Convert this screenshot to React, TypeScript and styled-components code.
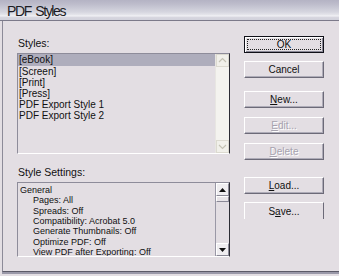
import React from "react";
import styled, { createGlobalStyle, css } from "styled-components";

const Global = createGlobalStyle`
  html, body { margin: 0; padding: 0; background: #e3dee3; }
  body { font-family: "Liberation Sans", Arial, sans-serif; }
`;

const Window = styled.div`
  width: 339px;
  height: 276px;
  background: #e3dee3;
  display: flex;
  flex-direction: column;
  overflow: hidden;
`;

const TitleBar = styled.div`
  height: 21px;
  border-bottom: 1px solid #7c7a8a;
  background: linear-gradient(
    to bottom,
    #b4b3c4 0px,
    #bdbccb 4px,
    #c9c9d5 8px,
    #d6d6df 12px,
    #e6e6ec 15px,
    #f4f4f7 16px,
    #d8d7e0 17px,
    #cfcfd9 21px
  );
  display: flex;
  align-items: center;
  padding-left: 7px;
  padding-top: 2px;
  box-sizing: border-box;
`;

const Title = styled.span`
  font-size: 14px;
  letter-spacing: -1.4px;
  color: #1c1c24;
  word-spacing: 2px;
`;

const Body = styled.div`
  margin-left: 2px;
  height: 250px;
  border-left: 1px solid #8c8a98;
  border-bottom: 1px solid #5c5a68;
  box-shadow: 0 2px 0 #9a98a8;
  display: flex;
  box-sizing: content-box;
`;

const LeftCol = styled.div`
  margin-left: 14px;
  width: 213px;
  padding-top: 16px;
  display: flex;
  flex-direction: column;
`;

const Label = styled.div<{ $top?: number }>`
  font-size: 10.5px;
  line-height: 12px;
  height: 12px;
  margin-top: ${(p) => p.$top ?? 0}px;
  margin-bottom: 4px;
  color: #101010;
  padding-left: 1px;
`;

const ListBox = styled.div<{ $h: number }>`
  height: ${(p) => p.$h}px;
  box-sizing: border-box;
  border-top: 1px solid #8e8c9a;
  border-left: 1px solid #8e8c9a;
  border-bottom: 1px solid #ffffff;
  border-right: 1px solid #2c2c34;
  display: flex;
`;

const ListItems = styled.div`
  flex: 1;
  overflow: hidden;
`;

const Row = styled.div<{ $sel?: boolean }>`
  font-size: 10px;
  line-height: 11px;
  height: 11px;
  padding-left: 1px;
  color: #101010;
  white-space: nowrap;
  ${(p) =>
    p.$sel &&
    css`
      background: #aeadbc;
      height: 12px;
    `}
`;

const ScrollBar = styled.div<{ $light?: boolean }>`
  width: 13px;
  background: ${(p) => (p.$light ? "#f4f3ef" : "#e3dee3")};
  border-left: 1px solid ${(p) => (p.$light ? "#e8e6e2" : "#9a98a6")};
  display: flex;
  flex-direction: column;
  justify-content: space-between;
`;

const ArrowBtn = styled.div<{ $disabled?: boolean }>`
  height: 13px;
  box-sizing: border-box;
  display: flex;
  align-items: center;
  justify-content: center;
  ${(p) =>
    p.$disabled
      ? css`
          border: 1px solid #dcdad0;
          background: #f1f0ea;
        `
      : css`
          border-top: 1px solid #ffffff;
          border-left: 1px solid #ffffff;
          border-bottom: 1px solid #8a8896;
          border-right: 1px solid #8a8896;
          background: #efedf0;
        `}
`;

const Thumb = styled.div`
  height: 6px;
  box-sizing: border-box;
  border-top: 1px solid #ffffff;
  border-left: 1px solid #ffffff;
  border-bottom: 1px solid #8a8896;
  border-right: 1px solid #8a8896;
  background: #e8e4e8;
`;

const Track = styled.div`
  flex: 1;
`;

const SettingsItems = styled.div`
  flex: 1;
  overflow: hidden;
  padding-top: 2px;
`;

const SettingLine = styled.div<{ $indent?: boolean }>`
  font-size: 9px;
  line-height: 10.35px;
  height: 10.35px;
  color: #101010;
  white-space: nowrap;
  padding-left: ${(p) => (p.$indent ? 15 : 2)}px;
`;

const RightCol = styled.div`
  margin-left: 14px;
  width: 80px;
  padding-top: 15px;
  display: flex;
  flex-direction: column;
`;

const Button = styled.div<{
  $top: number;
  $default?: boolean;
  $disabled?: boolean;
  $noBottom?: boolean;
}>`
  position: relative;
  margin-top: ${(p) => p.$top}px;
  height: 17px;
  box-sizing: border-box;
  display: flex;
  align-items: center;
  justify-content: center;
  font-size: 10px;
  color: ${(p) => (p.$disabled ? "#a6a2ae" : "#101010")};
  text-shadow: ${(p) => (p.$disabled ? "1px 1px 0 #ffffff" : "none")};
  background: #e3dee3;
  border-top: 1px solid #ffffff;
  border-left: 1px solid #ffffff;
  border-right: 1px solid #6c6a78;
  border-bottom: ${(p) => (p.$noBottom ? "0" : "1px solid #6c6a78")};
  box-shadow: ${(p) =>
    p.$noBottom ? "none" : "inset -1px -1px 0 #aeacb8"};
  ${(p) =>
    p.$default &&
    css`
      border: 1px solid #101018;
      box-shadow: inset 1px 1px 0 #ffffff, inset -1px -1px 0 #8a8896;
    `}
`;

const Focus = styled.span`
  position: absolute;
  inset: 2px;
  border: 1px dotted #202020;
  pointer-events: none;
`;

const U = styled.span`
  text-decoration: underline;
`;

const ChevronUp = ({ color }: { color: string }) => (
  <svg width="9" height="7" viewBox="0 0 9 7">
    <path d="M1 5 L4.5 1.5 L8 5" fill="none" stroke={color} strokeWidth="1.2" />
  </svg>
);
const ChevronDown = ({ color }: { color: string }) => (
  <svg width="9" height="7" viewBox="0 0 9 7">
    <path d="M1 2 L4.5 5.5 L8 2" fill="none" stroke={color} strokeWidth="1.2" />
  </svg>
);
const TriUp = () => (
  <svg width="7" height="4" viewBox="0 0 7 4">
    <path d="M0 4 L3.5 0 L7 4 Z" fill="#101010" />
  </svg>
);
const TriDown = () => (
  <svg width="7" height="4" viewBox="0 0 7 4">
    <path d="M0 0 L7 0 L3.5 4 Z" fill="#101010" />
  </svg>
);

const styles = [
  "[eBook]",
  "[Screen]",
  "[Print]",
  "[Press]",
  "PDF Export Style 1",
  "PDF Export Style 2",
];

const settings: { text: string; indent?: boolean }[] = [
  { text: "General" },
  { text: "Pages: All", indent: true },
  { text: "Spreads: Off", indent: true },
  { text: "Compatibility: Acrobat 5.0", indent: true },
  { text: "Generate Thumbnails: Off", indent: true },
  { text: "Optimize PDF: Off", indent: true },
  { text: "View PDF after Exporting: Off", indent: true },
];

export default function App() {
  return (
    <Window>
      <Global />
      <TitleBar>
        <Title>PDF Styles</Title>
      </TitleBar>
      <Body>
        <LeftCol>
          <Label>Styles:</Label>
          <ListBox $h={101}>
            <ListItems>
              {styles.map((s, i) => (
                <Row key={s} $sel={i === 0}>
                  {s}
                </Row>
              ))}
            </ListItems>
            <ScrollBar $light>
              <ArrowBtn $disabled>
                <ChevronUp color="#c4c2b4" />
              </ArrowBtn>
              <ArrowBtn $disabled>
                <ChevronDown color="#c4c2b4" />
              </ArrowBtn>
            </ScrollBar>
          </ListBox>
          <Label $top={12}>Style Settings:</Label>
          <ListBox $h={75}>
            <SettingsItems>
              {settings.map((s) => (
                <SettingLine key={s.text} $indent={s.indent}>
                  {s.text}
                </SettingLine>
              ))}
            </SettingsItems>
            <ScrollBar>
              <ArrowBtn>
                <TriUp />
              </ArrowBtn>
              <Thumb />
              <Track />
              <ArrowBtn>
                <TriDown />
              </ArrowBtn>
            </ScrollBar>
          </ListBox>
        </LeftCol>
        <RightCol>
          <Button $top={0} $default>
            <Focus />
            OK
          </Button>
          <Button $top={8}>Cancel</Button>
          <Button $top={13}>
            <U>N</U>ew...
          </Button>
          <Button $top={9} $disabled>
            <U>E</U>dit...
          </Button>
          <Button $top={9} $disabled>
            <U>D</U>elete
          </Button>
          <Button $top={17}>
            <U>L</U>oad...
          </Button>
          <Button $top={8} $noBottom>
            S<U>a</U>ve...
          </Button>
        </RightCol>
      </Body>
    </Window>
  );
}
